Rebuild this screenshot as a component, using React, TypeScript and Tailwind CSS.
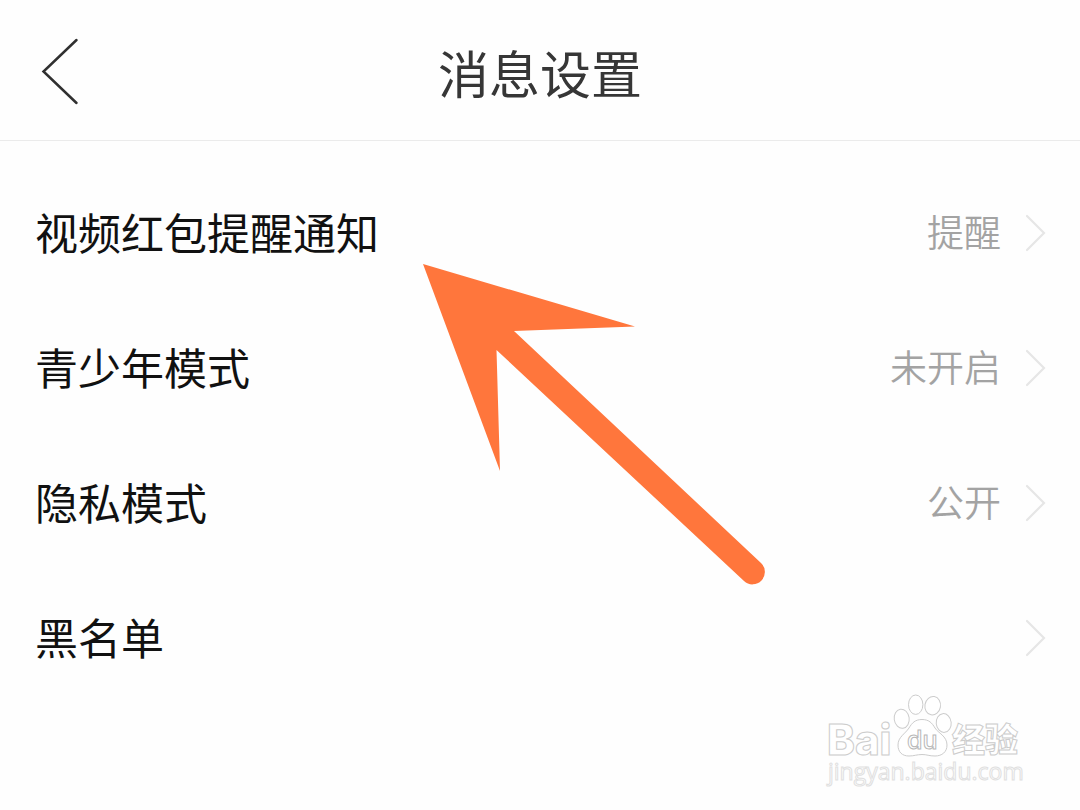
import React from 'react';

interface Setting {
  id: string;
  label: string;
  value?: string;
}

const settings: Setting[] = [
  { id: 'video', label: '视频红包提醒通知', value: '提醒' },
  { id: 'teen', label: '青少年模式', value: '未开启' },
  { id: 'privacy', label: '隐私模式', value: '公开' },
  { id: 'blacklist', label: '黑名单' },
];

function SettingRow({ label, value }: Setting) {
  return (
    <li>
      <button type="button" className="flex h-[135px] w-full items-center justify-between pr-[34px] pl-[35px] text-left">
        <span className="pb-1 text-[43px] leading-[60px] text-[#111111]">{label}</span>
        <span className="flex items-center gap-6">
          {value && <span className="pb-1 text-[37px] leading-[60px] font-[350] text-[#a3a3a3]">{value}</span>}
          <svg width="21" height="38" viewBox="0 0 21 38" fill="none" aria-hidden="true">
            <path d="M2 2 L19 19 L2 36" stroke="#e6e6e6" strokeWidth="2.2" strokeLinecap="round" />
          </svg>
        </span>
      </button>
    </li>
  );
}

function PointerArrow() {
  return (
    <svg
      className="pointer-events-none absolute top-[264px] left-[423px]"
      width="343"
      height="321"
      viewBox="0 0 343 321"
      aria-hidden="true"
    >
      <path
        d="M0 0 L212 62.5 L91 67 L338 299 A12.3 12.3 0 0 1 321 317 L73.5 86 L77 207 Z"
        fill="#ff763c"
      />
    </svg>
  );
}

function Watermark() {
  return (
    <svg
      className="pointer-events-none absolute right-12 bottom-2"
      width="208"
      height="110"
      viewBox="0 0 208 110"
      fill="#ffffff"
      stroke="#cccccc"
      strokeWidth="1"
    >
      <text x="3" y="63" fontSize="42" fontWeight="800" fontFamily="Inter, sans-serif">Bai</text>
      <ellipse cx="77.7" cy="26.7" rx="7.5" ry="9.6" transform="rotate(-8 77.7 26.7)" />
      <ellipse cx="91.7" cy="12.7" rx="7.2" ry="9.7" />
      <ellipse cx="108.7" cy="13.7" rx="7.8" ry="9.3" transform="rotate(10 108.7 13.7)" />
      <ellipse cx="119.7" cy="31" rx="7.5" ry="9.4" transform="rotate(-6 119.7 31)" />
      <path d="M98 27.5 C105 27.5 108 31 111 36 C114 41 123 44 123 53 C123 60 118 64 111 64 C105 64 103 62.500 98 62.500 C93 62.500 90 64 85 64 C78 64 74 60 74 53 C74 45 81 42 85 36 C88 31 91 27.500 98 27.500 Z" />
      <text x="83" y="57" fontSize="25" fontWeight="500" stroke="#b8b8b8" fontFamily="Inter, sans-serif">du</text>
      <text x="128" y="60" fontSize="33" fontWeight="900" fontFamily="'Noto Sans CJK SC', sans-serif">经验</text>
      <text x="4" y="88" fontSize="23" stroke="#e0e0e0" fontFamily="'Open Sans', sans-serif">jingyan.baidu.com</text>
    </svg>
  );
}

export default function App() {
  return (
    <div className="relative min-h-screen overflow-hidden bg-[#fefefe] font-['Noto_Sans_CJK_SC',sans-serif]">
      {/* Header */}
      <header className="grid h-[141px] grid-cols-[1fr_auto_1fr] items-center border-b border-[#ebebeb] px-10">
        <button type="button" aria-label="返回" className="justify-self-start pt-0.5">
          <svg width="40" height="68" viewBox="0 0 40 68" fill="none" aria-hidden="true">
            <path d="M36.500 3 L3.500 34.500 L36.500 66" stroke="#303030" strokeWidth="2.500" strokeLinecap="round" />
          </svg>
        </button>
        <h1 className="pt-1 text-[51px] leading-[64px] text-[#363636]">消息设置</h1>
      </header>

      {/* Settings */}
      <main className="pt-6">
        <ul>
          {settings.map((item) => (
            <SettingRow key={item.id} {...item} />
          ))}
        </ul>
      </main>

      <PointerArrow />
      <Watermark />
    </div>
  );
}
